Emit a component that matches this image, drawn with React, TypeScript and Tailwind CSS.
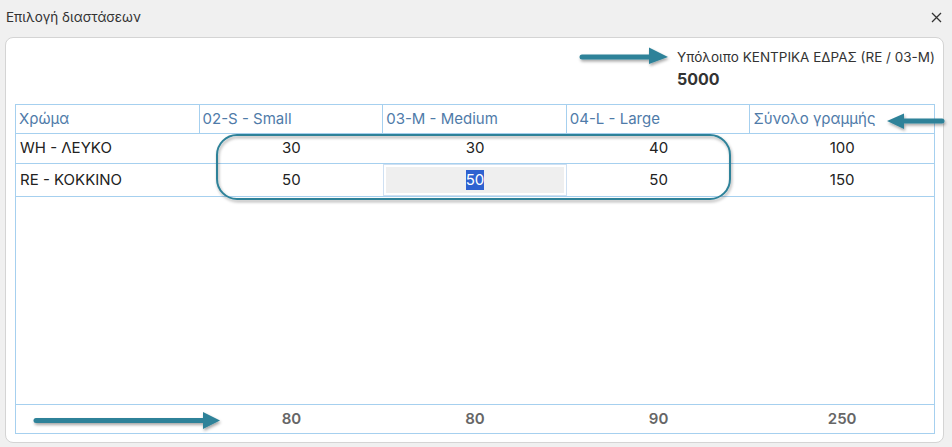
import React from "react";

const cols = ["Χρώμα", "02-S - Small", "03-M - Medium", "04-L - Large", "Σύνολο γραμμής"];
const rows = [
  { name: "WH - ΛΕΥΚΟ", vals: ["30", "30", "40", "100"] },
  { name: "RE - ΚΟΚΚΙΝΟ", vals: ["50", "50", "50", "150"] },
];
const totals = ["80", "80", "90", "250"];

function Overlay() {
  const c = "#2f8299";
  return (
    <svg className="absolute left-0 top-0 pointer-events-none" width="952" height="447" viewBox="0 0 952 447">
      <defs>
        <filter id="sh" x="-20%" y="-50%" width="140%" height="200%">
          <feDropShadow dx="1" dy="2" stdDeviation="1.5" floodColor="#000" floodOpacity="0.35" />
        </filter>
      </defs>
      <g filter="url(#sh)">
        <rect x="217" y="135" width="513" height="64" rx="20" ry="20" fill="none" stroke={c} strokeWidth="2" />
        <line x1="582" y1="57" x2="652" y2="57" stroke={c} strokeWidth="5" strokeLinecap="round" />
        <polygon points="649,47.5 668,57 649,64" fill={c} />
        <line x1="942" y1="121" x2="900" y2="121" stroke={c} strokeWidth="5" strokeLinecap="round" />
        <polygon points="904,113.5 887,121 904,129" fill={c} />
        <line x1="36" y1="420.5" x2="206" y2="420.5" stroke={c} strokeWidth="5" strokeLinecap="round" />
        <polygon points="203,412 220,420.5 203,429" fill={c} />
      </g>
    </svg>
  );
}

export default function App() {
  return (
    <div
      className="relative w-[952px] h-[447px] bg-[#f0f0f0] flex flex-col overflow-hidden"
      style={{ fontFamily: "Inter, 'Noto Sans', sans-serif" }}
    >
      <div className="h-[37px] flex items-center justify-between pl-[6px] pr-[10px] text-[13.5px] text-[#333]">
        <span className="-mt-[2px]">Επιλογή διαστάσεων</span>
        <svg width="11" height="11" viewBox="0 0 11 11" className="-mt-[3px]">
          <path d="M1 1 L10 10 M10 1 L1 10" stroke="#333" strokeWidth="1.3" />
        </svg>
      </div>
      <div className="ml-[5px] mr-[8px] h-[406px] bg-white rounded-[8px] border border-[#d4d4d4] flex flex-col">
        <div className="h-[66px] flex justify-end pr-[3px] pt-[9px]">
          <div className="w-[263px] flex flex-col">
            <span className="text-[13.5px] leading-[20px] text-[#333]">Υπόλοιπο ΚΕΝΤΡΙΚΑ ΕΔΡΑΣ (RE / 03-M)</span>
            <span className="text-[16px] leading-[25px] font-bold text-[#333]">5000</span>
          </div>
        </div>
        <div className="ml-[9px] mr-[8px] h-[330px] border border-[#a6d0ef] flex flex-col">
          <div className="grid grid-cols-5 h-[29px] border-b border-[#a6d0ef]">
            {cols.map((c, i) => (
              <div
                key={c}
                className={`flex items-center pl-[3px] text-[15px] text-[#4f7ba9] ${i < 4 ? "border-r border-[#a6d0ef]" : ""}`}
              >
                {c}
              </div>
            ))}
          </div>
          {rows.map((r, ri) => (
            <div key={r.name} className={`grid grid-cols-5 ${ri === 0 ? "h-[30px]" : "h-[33px]"} border-b border-[#a6d0ef] text-[15px] text-[#222]`}>
              <div className="flex items-center pl-[4px]">{r.name}</div>
              {r.vals.map((v, vi) =>
                ri === 1 && vi === 1 ? (
                  <div key={vi} className="border-[1.5px] border-[#cfe0f2] p-[2px]">
                    <div className="h-full bg-[#efefef] flex items-center justify-center">
                      <span className="bg-[#2f62d0] text-white leading-[20px]">{v}</span>
                    </div>
                  </div>
                ) : (
                  <div key={vi} className="flex items-center justify-center">{v}</div>
                )
              )}
            </div>
          ))}
          <div className="flex-1" />
          <div className="grid grid-cols-5 h-[29px] border-t border-[#a6d0ef] text-[15px] font-semibold text-[#666]">
            <div />
            {totals.map((t, i) => (
              <div key={i} className="flex items-center justify-center">{t}</div>
            ))}
          </div>
        </div>
      </div>
      <Overlay />
    </div>
  );
}
